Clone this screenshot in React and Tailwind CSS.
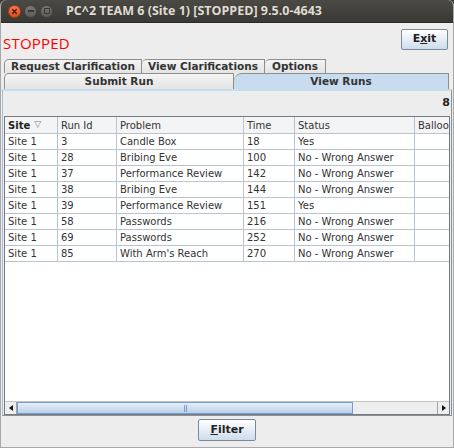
import React from "react";

const rows = [
  ["Site 1", "3", "Candle Box", "18", "Yes"],
  ["Site 1", "28", "Bribing Eve", "100", "No - Wrong Answer"],
  ["Site 1", "37", "Performance Review", "142", "No - Wrong Answer"],
  ["Site 1", "38", "Bribing Eve", "144", "No - Wrong Answer"],
  ["Site 1", "39", "Performance Review", "151", "Yes"],
  ["Site 1", "58", "Passwords", "216", "No - Wrong Answer"],
  ["Site 1", "69", "Passwords", "252", "No - Wrong Answer"],
  ["Site 1", "85", "With Arm's Reach", "270", "No - Wrong Answer"],
];

const widths = ["w-[53px]", "w-[59px]", "w-[127px]", "w-[51px]", "w-[120px]", "w-[80px]"];

function Cell({ w, children, bold }) {
  return (
    <div
      className={`${w} shrink-0 h-full border-r border-[#b8c4d2] px-[3px] flex items-center overflow-hidden whitespace-nowrap ${
        bold ? "font-bold text-[#222]" : "text-[#333]"
      }`}
    >
      {children}
    </div>
  );
}

export default function App() {
  const dv = { fontFamily: '"DejaVu Sans", sans-serif' };
  return (
    <div className="w-[454px] h-[448px] bg-[#3c3b37] overflow-hidden">
      <div className="w-[454px] h-[448px] flex flex-col rounded-t-[6px] overflow-hidden bg-[#ededed] border-x border-b border-[#a8a8a8]" style={dv}>
        {/* title bar */}
        <div className="h-[23px] shrink-0 flex items-center bg-gradient-to-b from-[#4a4944] to-[#3a3935] border-b border-[#2a2925]">
          <div className="flex items-center gap-[3px] pl-[7px]">
            <div className="w-[13px] h-[13px] rounded-full bg-gradient-to-b from-[#f47a54] to-[#df4a16] flex items-center justify-center border border-[#b43a10]">
              <svg width="7" height="7" viewBox="0 0 7 7"><path d="M1.3 1.3 L5.7 5.7 M5.7 1.3 L1.3 5.7" stroke="#4a1a08" strokeWidth="1.4" /></svg>
            </div>
            <div className="w-[13px] h-[13px] rounded-full bg-gradient-to-b from-[#7a7873] to-[#5c5b56] border border-[#44433f] flex items-center justify-center">
              <div className="w-[6px] h-[1.5px] bg-[#3a3935]" />
            </div>
            <div className="w-[13px] h-[13px] rounded-full bg-gradient-to-b from-[#7a7873] to-[#5c5b56] border border-[#44433f] flex items-center justify-center">
              <div className="w-[6px] h-[6px] border border-[#3a3935]" />
            </div>
          </div>
          <div className="ml-[13px] text-[12.5px] font-bold text-[#dfdbd2]" style={{ fontFamily: '"Open Sans", sans-serif' }}>
            PC^2 TEAM 6 (Site 1) [STOPPED] 9.5.0-4643
          </div>
        </div>

        {/* header row */}
        <div className="h-[36px] shrink-0 flex items-start justify-between pl-[2px] pr-[5px]">
          <div className="mt-[9px] text-[15px] text-[#ff0000] tracking-[0.2px]" style={{ fontFamily: '"Open Sans", sans-serif' }}>
            STOPPED
          </div>
          <div className="mt-[6px] w-[47px] h-[21px] border border-[#7a8a99] rounded-[2px] bg-gradient-to-b from-[#ffffff] to-[#cddcec] flex items-center justify-center text-[11px] font-bold text-[#222]">
            E<span className="underline">x</span>it
          </div>
        </div>

        {/* tabs row 1 */}
        <div className="h-[14px] shrink-0 flex pl-[3px] text-[10.5px] font-bold text-[#333]">
          <div className="w-[138px] h-full border-t border-l border-r border-[#8e8f8f] rounded-tl-[5px] bg-gradient-to-b from-[#f4f4f4] to-[#e4e4e4] flex items-center justify-center">Request Clarification</div>
          <div className="w-[123px] h-full border-t border-r border-[#8e8f8f] rounded-tl-[5px] bg-gradient-to-b from-[#f4f4f4] to-[#e4e4e4] flex items-center justify-center">View Clarifications</div>
          <div className="w-[61px] h-full border-t border-r border-[#8e8f8f] rounded-tl-[5px] bg-gradient-to-b from-[#f4f4f4] to-[#e4e4e4] flex items-center justify-center">Options</div>
        </div>
        {/* tabs row 2 */}
        <div className="h-[16px] shrink-0 flex pl-[3px] pr-[4px] text-[10.5px] font-bold text-[#333]">
          <div className="w-[230px] h-full border-t border-l border-r border-[#8e8f8f] rounded-tl-[5px] bg-gradient-to-b from-[#f4f4f4] to-[#e4e4e4] flex items-center justify-center">Submit Run</div>
          <div className="flex-1 h-full border-t border-r border-[#8e8f8f] rounded-tl-[8px] bg-[#c8dcef] flex items-center justify-center">View Runs</div>
        </div>

        {/* panel */}
        <div className="flex-1 min-h-0 flex flex-col mx-[1px] border border-[#8e8f8f] border-t-[2px] border-t-[#c8dcef] border-l-[#a7bfd8]">
          <div className="h-[25px] shrink-0 flex items-center justify-end pr-[1px] text-[11px] font-bold text-[#222]">8</div>
          <div className="flex-1 min-h-0 mx-[1px] border border-[#6f7b87] bg-white flex flex-col overflow-hidden text-[10px]">
            <div className="h-[17px] shrink-0 flex border-b border-[#b8c4d2] bg-[#f4f4f4]">
              <Cell w={widths[0]} bold>
                Site<span className="ml-[4px] text-[9px] font-normal text-[#777]">▽</span>
              </Cell>
              <Cell w={widths[1]}>Run Id</Cell>
              <Cell w={widths[2]}>Problem</Cell>
              <Cell w={widths[3]}>Time</Cell>
              <Cell w={widths[4]}>Status</Cell>
              <Cell w={widths[5]}>Balloon</Cell>
            </div>
            {rows.map((r, i) => (
              <div key={i} className="h-[16px] shrink-0 flex border-b border-[#b8c4d2]">
                {r.map((c, j) => (
                  <Cell key={j} w={widths[j]}>{c}</Cell>
                ))}
                <Cell w={widths[5]}></Cell>
              </div>
            ))}
            <div className="flex-1" />
            {/* scrollbar */}
            <div className="h-[13px] shrink-0 flex bg-[#eeeeee] border-t border-[#c4c4c4]">
              <div className="w-[12px] h-full border-r border-[#a0a0a0] flex items-center justify-center bg-[#eeeeee]">
                <svg width="4" height="6" viewBox="0 0 4 6"><path d="M4 0 L0 3 L4 6 Z" fill="#111" /></svg>
              </div>
              <div className="w-[336px] h-full border border-[#7a9ccd] bg-gradient-to-b from-[#e6eef8] to-[#b9d0e8] flex items-center justify-center">
                <div className="flex gap-[1px]">
                  <div className="w-[1px] h-[7px] bg-[#7a9ccd]" />
                  <div className="w-[1px] h-[7px] bg-[#7a9ccd]" />
                </div>
              </div>
              <div className="flex-1" />
              <div className="w-[12px] h-full border-l border-[#a0a0a0] flex items-center justify-center bg-[#eeeeee]">
                <svg width="4" height="6" viewBox="0 0 4 6"><path d="M0 0 L4 3 L0 6 Z" fill="#111" /></svg>
              </div>
            </div>
          </div>
        </div>

        {/* bottom */}
        <div className="h-[31px] shrink-0 flex items-start justify-center pt-[3px]">
          <div className="w-[58px] h-[22px] border border-[#7a8a99] rounded-[2px] bg-gradient-to-b from-[#ffffff] to-[#cddcec] flex items-center justify-center text-[11px] font-bold text-[#222]">
            <span className="underline">F</span>ilter
          </div>
        </div>
      </div>
    </div>
  );
}
